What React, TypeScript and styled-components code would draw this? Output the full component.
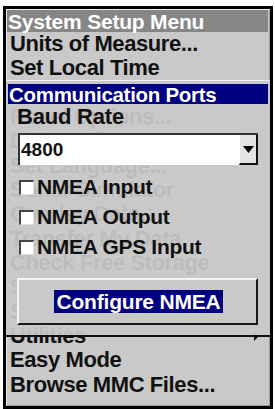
import * as React from 'react';
import styled, { createGlobalStyle } from 'styled-components';

const GlobalStyle = createGlobalStyle`
	html, body {
		margin: 0;
		padding: 0;
		background: #ffffff;
	}
	body {
		font-family: 'Liberation Sans', Arial, sans-serif;
		font-weight: bold;
	}
`;

const SFrame = styled.div`
	position: relative;
	box-sizing: border-box;
	margin: 6px 0 0 3px;
	width: 270px;
	height: 403px;
	border: 3px solid #000;
	background: #c9c9c9;
	box-shadow: inset 1px 1px 0 #ececec, inset -1px -1px 0 #9a9a9a;
	overflow: hidden;
`;

const SMenuTitle = styled.div`
	margin: 1px 2px 0 1px;
	height: 22px;
	line-height: 23px;
	padding-left: 1px;
	background: #868686;
	color: #fff;
	font-size: 21px;
	letter-spacing: -0.2px;
	white-space: nowrap;
`;

const SMenuList = styled.div`
	display: flex;
	flex-direction: column;
	padding-left: 4px;
`;

const SMenuItem = styled.div`
	display: flex;
	align-items: center;
	justify-content: space-between;
	height: 24.35px;
	line-height: 24.35px;
	padding-right: 11px;
	font-size: 22px;
	letter-spacing: -0.4px;
	color: #111;
	white-space: nowrap;
`;

const SSubArrow = styled.span`
	width: 0;
	height: 0;
	border-top: 5px solid transparent;
	border-bottom: 5px solid transparent;
	border-left: 5px solid #111;
`;

const SPopup = styled.div`
	position: absolute;
	top: 71px;
	left: 0;
	right: 0;
	height: 257px;
	box-sizing: border-box;
	border-top: 1px solid #f2f2f2;
	border-bottom: 2px solid #111;
	background: rgba(201, 201, 201, 0.93);
	padding: 3px 2px 0 2px;
	display: flex;
	flex-direction: column;
`;

const SPopupTitle = styled.div`
	height: 20px;
	line-height: 21px;
	padding-left: 1px;
	background: #000080;
	color: #fff;
	font-size: 20.5px;
	letter-spacing: -0.3px;
	white-space: nowrap;
`;

const SFieldLabel = styled.div`
	height: 24px;
	line-height: 26px;
	padding-left: 9px;
	font-size: 22px;
	letter-spacing: -0.2px;
	color: #111;
`;

const SSelect = styled.div`
	display: flex;
	margin: 5px 10px 0 10px;
	height: 32px;
	box-sizing: border-box;
	background: #fff;
	border-top: 2px solid #333;
	border-left: 2px solid #333;
`;

const SSelectValue = styled.div`
	flex: 1;
	padding-left: 1px;
	line-height: 30px;
	font-size: 19px;
	color: #111;
`;

const SSelectArrow = styled.div`
	width: 19px;
	box-sizing: border-box;
	display: flex;
	align-items: center;
	justify-content: center;
	background: #e4e4e4;
	border-right: 2px solid #111;
	border-bottom: 2px solid #111;
	border-left: 1px solid #fff;
`;

const SChecks = styled.div`
	display: flex;
	flex-direction: column;
	margin-top: 7px;
`;

const SCheckRow = styled.div`
	display: flex;
	align-items: center;
	height: 30px;
	padding-left: 11px;
	gap: 3px;
	font-size: 21px;
	letter-spacing: -0.3px;
	color: #111;
	white-space: nowrap;
`;

const SCheckBox = styled.span`
	display: inline-block;
	box-sizing: border-box;
	width: 15px;
	height: 15px;
	background: #fff;
	border-top: 2px solid #444;
	border-left: 2px solid #444;
	border-right: 1px solid #ddd;
	border-bottom: 1px solid #ddd;
`;

const SButton = styled.div`
	display: flex;
	align-items: center;
	justify-content: center;
	margin: 16px 10px 0 9px;
	height: 47px;
	box-sizing: border-box;
	background: #c9c9c9;
	border-top: 2px solid #f4f4f4;
	border-left: 2px solid #f4f4f4;
	border-right: 2px solid #1a1a1a;
	border-bottom: 2px solid #1a1a1a;
`;

const SButtonLabel = styled.span`
	background: #000080;
	color: #fff;
	font-size: 21px;
	letter-spacing: -0.2px;
	line-height: 23px;
	padding: 0 2px;
	margin-left: 2px;
`;

const menuItems = [
	{ label: 'Units of Measure...' },
	{ label: 'Set Local Time' },
	{ label: 'Alarms...' },
	{ label: 'Reset Options...' },
	{ label: 'Delete All Waypts' },
	{ label: 'Set Language...' },
	{ label: 'Sonar Simulator' },
	{ label: 'Overlay Data...' },
	{ label: 'Transfer My Data' },
	{ label: 'Check Free Storage' },
	{ label: 'Software Info' },
	{ label: 'Sounds...' },
	{ label: 'Utilities', sub: true },
	{ label: 'Easy Mode' },
	{ label: 'Browse MMC Files...' },
];

const checks = ['NMEA Input', 'NMEA Output', 'NMEA GPS Input'];

const App = () => (
	<>
		<GlobalStyle />
		<SFrame>
			<SMenuTitle>System Setup Menu</SMenuTitle>
			<SMenuList>
				{menuItems.map((item) => (
					<SMenuItem key={item.label}>
						<span>{item.label}</span>
						{item.sub && <SSubArrow />}
					</SMenuItem>
				))}
			</SMenuList>
			<SPopup>
				<SPopupTitle>Communication Ports</SPopupTitle>
				<SFieldLabel>Baud Rate</SFieldLabel>
				<SSelect>
					<SSelectValue>4800</SSelectValue>
					<SSelectArrow>
						<svg width='11' height='7' viewBox='0 0 11 7'>
							<path d='M0 0 H11 L5.5 7 Z' fill='#000' />
						</svg>
					</SSelectArrow>
				</SSelect>
				<SChecks>
					{checks.map((c) => (
						<SCheckRow key={c}>
							<SCheckBox />
							{c}
						</SCheckRow>
					))}
				</SChecks>
				<SButton>
					<SButtonLabel>Configure NMEA</SButtonLabel>
				</SButton>
			</SPopup>
		</SFrame>
	</>
);

export default App;
